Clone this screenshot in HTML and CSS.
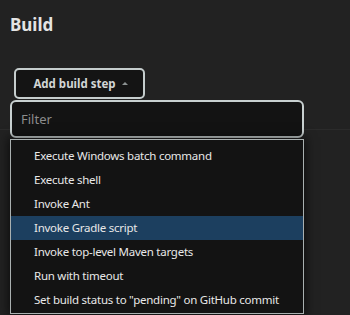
FILE: index.html
```html
<!DOCTYPE html>
<html>
<head>
  <title>Build</title>
  <link rel="stylesheet" href="styles.css">
</head>
<body>
<div class="section">
  <h2 class="section-title">Build</h2>
  <div class="step-area">
    <button class="add-button">Add build step <span class="caret"></span></button>
  </div>
  <div class="separator"></div>

  <div class="dropdown">
    <input class="filter" type="text" placeholder="Filter" />
    <ul class="menu">
      <li>Execute Windows batch command</li>
      <li>Execute shell</li>
      <li>Invoke Ant</li>
      <li class="active">Invoke Gradle script</li>
      <li>Invoke top-level Maven targets</li>
      <li>Run with timeout</li>
      <li>Set build status to "pending" on GitHub commit</li>
    </ul>
  </div>
</div>
</body>
</html>
```

FILE: styles.css
```css
body {
  margin: 0;
  background-color: #222222;
  font-family: "Noto Sans", "Open Sans", sans-serif;
  color: #e6e6e6;
  height: 315px;
  overflow: hidden;
}
.section {
  position: relative;
  padding: 0 0 0 10px;
}
.section-title {
  margin: 0;
  padding-top: 13px;
  font-size: 17px;
  line-height: 24px;
  font-weight: 700;
  color: #e4e4e4;
}
.step-area {
  padding: 31px 0 0 4px;
}
.add-button {
  width: 131px;
  height: 31px;
  background-color: #141414;
  border: 2px solid #c5cdcd;
  border-radius: 5px;
  color: #d2d6d6;
  font-family: inherit;
  font-size: 11.5px;
  font-weight: 700;
  padding: 0 0 1px 2px;
}
.caret {
  display: inline-block;
  width: 0;
  height: 0;
  margin-left: 3px;
  vertical-align: 3px;
  border-left: 3px solid transparent;
  border-right: 3px solid transparent;
  border-bottom: 3px solid #8c9292;
}
.separator {
  margin: 30px 0 0 -10px;
  height: 1px;
  background-color: #2b2b2b;
}
.dropdown {
  position: absolute;
  top: 100px;
  left: 10px;
  width: 294px;
}
.filter {
  display: block;
  box-sizing: border-box;
  width: 294px;
  height: 38px;
  margin: 0;
  padding: 0 9px;
  background-color: #131313;
  border: 2px solid #c8d0d0;
  border-radius: 6px;
  color: #e6e6e6;
  font-family: inherit;
  font-size: 13px;
  outline: none;
}
.filter::placeholder {
  color: #8c8c8c;
}
.menu {
  list-style: none;
  margin: 1px 0 0 0;
  padding: 4px 0 0 0;
  background-color: #131313;
  border: 1px solid #a9b0b0;
  box-sizing: border-box;
  height: 175px;
  box-shadow: 0 0 10px 2px rgba(0, 0, 0, 0.6);
}
.menu li {
  height: 24px;
  line-height: 24px;
  padding-left: 23px;
  font-size: 11.5px;
  letter-spacing: -0.25px;
  color: #e8e8e8;
  white-space: nowrap;
}
.menu li.active {
  background-color: #1c3f5f;
}
```
